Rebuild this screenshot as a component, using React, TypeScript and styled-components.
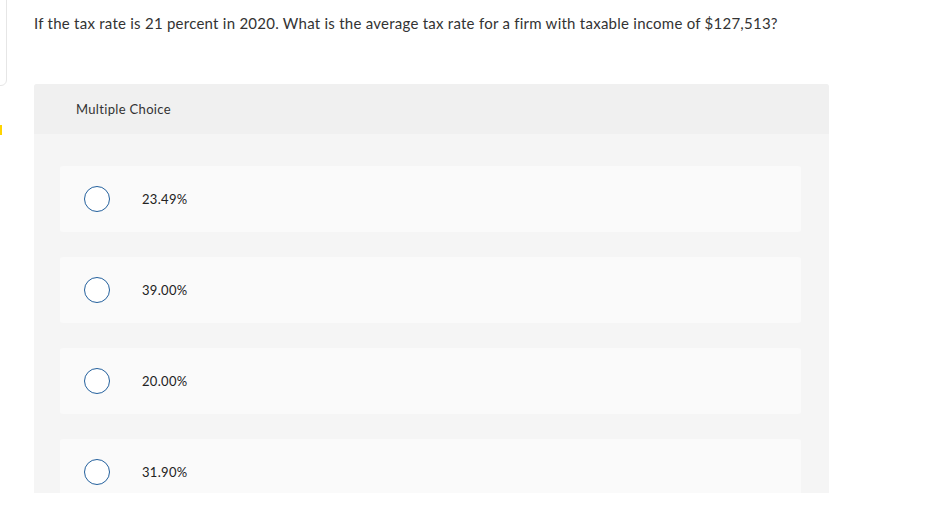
import React from 'react';
import styled, { createGlobalStyle } from 'styled-components';

const GlobalStyle = createGlobalStyle`
  html, body {
    margin: 0;
    padding: 0;
    background: #ffffff;
  }
  body {
    font-family: 'Lato', 'Liberation Sans', sans-serif;
    color: #333333;
  }
`;

const Page = styled.div`
  position: relative;
  width: 945px;
  height: 513px;
  overflow: hidden;
  background: #ffffff;
`;

const SideCard = styled.div`
  position: absolute;
  left: -10px;
  top: -10px;
  width: 15px;
  height: 94px;
  border: 1px solid #e6e6e6;
  border-radius: 0 0 6px 0;
`;

const Marker = styled.div`
  position: absolute;
  left: 0;
  top: 125px;
  width: 2px;
  height: 10px;
  background: #ffd400;
`;

const Content = styled.div`
  padding: 0 0 0 34px;
  width: 795px;
`;

const Question = styled.p`
  margin: 0;
  padding-top: 13px;
  font-size: 15px;
  line-height: 20px;
  letter-spacing: 0.25px;
  color: #333333;
`;

const Panel = styled.section`
  margin-top: 51px;
  height: 409px;
  overflow: hidden;
  background: #f5f5f5;
  border-radius: 3px 3px 0 0;
`;

const PanelHeader = styled.header`
  height: 50px;
  display: flex;
  align-items: center;
  padding-left: 42px;
  background: #f0f0f0;
  font-size: 13px;
  letter-spacing: 0.33px;
  color: #333333;
`;

const OptionList = styled.div`
  display: flex;
  flex-direction: column;
  gap: 25px;
  padding: 32px 28px 0 26px;
`;

const Option = styled.label`
  height: 66px;
  display: flex;
  align-items: center;
  background: #fafafa;
  border-radius: 3px;
  padding-left: 24px;
  cursor: pointer;
`;

const Radio = styled.span`
  width: 24px;
  height: 24px;
  border: 1.5px solid #23609d;
  border-radius: 50%;
  background: #ffffff;
  flex-shrink: 0;
`;

const OptionText = styled.span`
  margin-left: 32px;
  font-size: 13px;
  letter-spacing: 0.3px;
  color: #222222;
`;

const choices = ['23.49%', '39.00%', '20.00%', '31.90%'];

const App: React.FC = () => {
  return (
    <Page>
      <GlobalStyle />
      <SideCard />
      <Marker />
      <Content>
        <Question>
          If the tax rate is 21 percent in 2020. What is the average tax rate for a firm with taxable income of $127,513?
        </Question>
        <Panel>
          <PanelHeader>Multiple Choice</PanelHeader>
          <OptionList>
            {choices.map(c => (
              <Option key={c}>
                <Radio />
                <OptionText>{c}</OptionText>
              </Option>
            ))}
          </OptionList>
        </Panel>
      </Content>
    </Page>
  );
};

export default App;
